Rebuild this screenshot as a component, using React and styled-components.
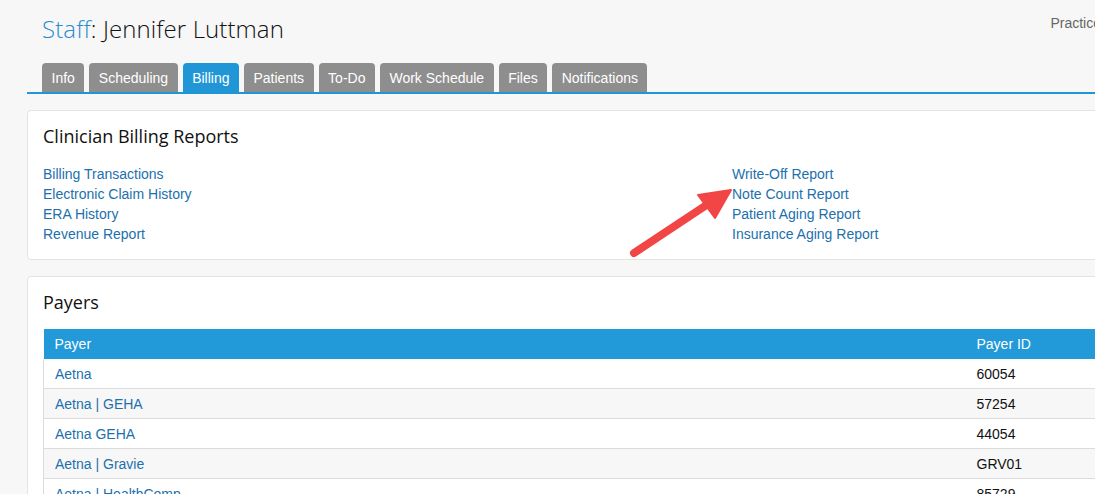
import styled, { createGlobalStyle } from "styled-components";

const Global = createGlobalStyle`
  html, body {
    margin: 0;
    padding: 0;
    background: #f7f7f7;
    overflow: hidden;
  }
  body {
    font-family: "Liberation Sans", Arial, sans-serif;
    font-size: 14px;
    color: #222;
  }
`;

const Page = styled.div`
  position: relative;
  width: 1180px;
  padding: 0 0 0 27px;
  box-sizing: border-box;
`;

const Header = styled.header`
  display: flex;
  justify-content: space-between;
  align-items: flex-start;
  padding: 12px 0 0 15px;
  height: 63px;
  box-sizing: border-box;
`;

const Title = styled.h1`
  margin: 0;
  font-family: "Open Sans", sans-serif;
  font-weight: 300;
  font-size: 24px;
  letter-spacing: 0.1px;
  line-height: 33px;
  color: #111;

  span {
    color: #2a8ccf;
  }
`;

const Practice = styled.div`
  margin: 3px 79px 0 0;
  color: #666;
  font-size: 14px;
`;

const Tabs = styled.nav`
  display: flex;
  gap: 5px;
  padding-left: 15px;
  border-bottom: 2px solid #2196d6;
  height: 29px;
`;

const Tab = styled.div`
  display: flex;
  align-items: center;
  padding: 0 9.5px;
  border-radius: 4px 4px 0 0;
  background: ${(p) => (p.$active ? "#2196d6" : "#8e8e8e")};
  color: #fff;
  font-size: 14px;
`;

const Card = styled.section`
  margin-top: 16px;
  background: #fff;
  border: 1px solid #e3e3e3;
  border-radius: 4px;
  padding: 12px 15px 16px 15px;
  height: ${(p) => p.$h || "auto"};
  box-sizing: border-box;
`;

const CardTitle = styled.h2`
  margin: 0;
  font-family: "Open Sans", sans-serif;
  font-weight: 400;
  font-size: 18px;
  line-height: 26px;
  color: #111;
`;

const LinkGrid = styled.div`
  margin-top: 15px;
  display: grid;
  grid-template-columns: 689px 1fr;
`;

const LinkList = styled.div`
  display: flex;
  flex-direction: column;
`;

const Link = styled.a`
  color: #1c70ad;
  text-decoration: none;
  line-height: 20px;
  font-size: 14px;
`;

const Table = styled.table`
  margin-top: 14px;
  width: 1120px;
  border-collapse: collapse;
  font-size: 14px;
`;

const Th = styled.th`
  background: #2299d8;
  color: #fff;
  font-weight: 400;
  text-align: left;
  height: 30px;
  padding: 0 11px;
  width: ${(p) => p.$w || "auto"};
`;

const Tr = styled.tr`
  background: ${(p) => (p.$odd ? "#f7f7f7" : "#fff")};
  border-bottom: 1px solid #dcdcdc;
  border-left: 1px solid #dcdcdc;
`;

const Td = styled.td`
  height: 29px;
  padding: 0 11px;
  color: ${(p) => (p.$link ? "#1c70ad" : "#111")};
`;

const Arrow = styled.svg`
  position: absolute;
  left: 620px;
  top: 180px;
  pointer-events: none;
`;

const payers = [
  ["Aetna", "60054"],
  ["Aetna | GEHA", "57254"],
  ["Aetna GEHA", "44054"],
  ["Aetna | Gravie", "GRV01"],
  ["Aetna | HealthComp", "85729"],
];

export default function App() {
  return (
    <>
      <Global />
      <Page>
        <Header>
          <Title>
            <span>Staff</span>: Jennifer Luttman
          </Title>
          <Practice>Practice</Practice>
        </Header>
        <Tabs>
          {["Info", "Scheduling", "Billing", "Patients", "To-Do", "Work Schedule", "Files", "Notifications"].map((t) => (
            <Tab key={t} $active={t === "Billing"}>
              {t}
            </Tab>
          ))}
        </Tabs>

        <Card $h="150px">
          <CardTitle>Clinician Billing Reports</CardTitle>
          <LinkGrid>
            <LinkList>
              <Link>Billing Transactions</Link>
              <Link>Electronic Claim History</Link>
              <Link>ERA History</Link>
              <Link>Revenue Report</Link>
            </LinkList>
            <LinkList>
              <Link>Write-Off Report</Link>
              <Link>Note Count Report</Link>
              <Link>Patient Aging Report</Link>
              <Link>Insurance Aging Report</Link>
            </LinkList>
          </LinkGrid>
        </Card>

        <Card>
          <CardTitle>Payers</CardTitle>
          <Table>
            <thead>
              <tr>
                <Th $w="900px">Payer</Th>
                <Th>Payer ID</Th>
              </tr>
            </thead>
            <tbody>
              {payers.map(([name, id], i) => (
                <Tr key={name} $odd={i % 2 === 1}>
                  <Td $link>{name}</Td>
                  <Td>{id}</Td>
                </Tr>
              ))}
            </tbody>
          </Table>
        </Card>

        <Arrow width="120" height="85" viewBox="0 0 120 85">
          <line x1="14" y1="73" x2="88" y2="24" stroke="#f24545" strokeWidth="8" strokeLinecap="round" />
          <polygon points="111,10 78,15 95,38" fill="#f24545" stroke="#f24545" strokeWidth="2" strokeLinejoin="round" />
        </Arrow>
      </Page>
    </>
  );
}
